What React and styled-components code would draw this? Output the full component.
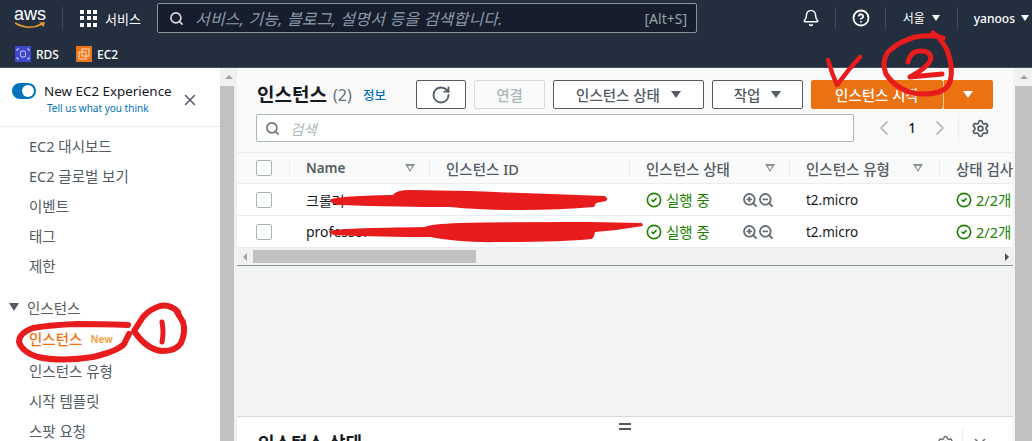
import React from "react";
import styled, { createGlobalStyle } from "styled-components";
import {
  Bell,
  ChevronLeft,
  ChevronRight,
  CircleCheck,
  CircleHelp,
  RotateCw,
  Search,
  Settings,
  X,
  ZoomIn,
  ZoomOut,
} from "lucide-react";

const GlobalStyle = createGlobalStyle`
  html, body {
    margin: 0;
    padding: 0;
    background: #fff;
  }
  body {
    font-family: "Noto Sans", "Noto Sans CJK KR", sans-serif;
  }
`;

const Page = styled.div`
  position: relative;
  width: 1032px;
  height: 441px;
  overflow: hidden;
  font-size: 13.5px;
  color: #16191f;
`;

/* ---- top nav ---- */

const TopBar = styled.header`
  height: 42px;
  box-sizing: border-box;
  padding-bottom: 6px;
  background: #232f3e;
  display: flex;
  align-items: center;
  color: #fff;
`;

const Logo = styled.div`
  width: 34px;
  margin-left: 13px;
  display: flex;
  flex-direction: column;
  align-items: center;
  font-family: "Liberation Sans", sans-serif;
  font-size: 18px;
  line-height: 17px;

  svg {
    display: block;
    margin-top: -2px;
  }
`;

const NavDivider = styled.span`
  width: 1px;
  height: 22px;
  background: #414d5c;
  margin: ${(p) => p.$margin || "0"};
`;

const Dots = styled.div`
  display: grid;
  grid-template-columns: repeat(3, 4px);
  grid-auto-rows: 4px;
  gap: 2.5px;
  margin-right: 8px;

  span {
    background: #fff;
  }
`;

const ServiceLabel = styled.span`
  font-size: 13px;
  width: 37px;
`;

const GlobalSearch = styled.div`
  width: 540px;
  height: 30px;
  box-sizing: border-box;
  margin-left: 15px;
  background: #161e2d;
  border: 1px solid #879596;
  border-radius: 2px;
  display: flex;
  align-items: center;
  padding: 0 9px 0 11px;
  color: #95a5a6;
`;

const GlobalPlaceholder = styled.span`
  flex: 1;
  margin-left: 11px;
  font-style: italic;
  font-size: 16px;
  letter-spacing: 0.2px;
  color: #8d99a8;
`;

const NavRight = styled.div`
  display: flex;
  align-items: center;
  margin-left: auto;
  height: 100%;
`;

const NavCaret = styled.span`
  width: 0;
  height: 0;
  border-left: 4.5px solid transparent;
  border-right: 4.5px solid transparent;
  border-top: 6px solid #fff;
  margin-left: ${(p) => p.$gap || 7}px;
  margin-right: ${(p) => p.$end || 0}px;
`;

const NavText = styled.span`
  font-size: ${(p) => p.$size || 12}px;
  font-weight: ${(p) => p.$weight || 400};
`;

const ShortcutBar = styled.div`
  height: 26px;
  background: #232f3e;
  display: flex;
  align-items: center;
  padding-left: 15px;
  padding-bottom: 1px;
  box-sizing: border-box;
  border-bottom: 1px solid #414d5c;
  color: #fff;
  font-size: 12px;
  font-weight: 500;
`;

const Shortcut = styled.div`
  display: flex;
  align-items: center;
  gap: 5px;
  margin-right: 17px;
`;

const ServiceIcon = styled.span`
  width: 16px;
  height: 16px;
  display: block;
  background: ${(p) => p.$bg};
`;

/* ---- body ---- */

const Body = styled.div`
  height: 373px;
  display: flex;
`;

const Sidebar = styled.aside`
  width: 220px;
  flex: none;
  background: #fff;
  overflow: hidden;
`;

const ToggleBlock = styled.div`
  height: 59px;
  box-sizing: border-box;
  border-bottom: 1px solid #eaeded;
  position: relative;
  padding: 14px 0 0 12px;
`;

const ToggleRow = styled.div`
  display: flex;
  align-items: center;
  gap: 8px;
  font-size: 13.4px;
  line-height: 18px;
  color: #16191f;
  white-space: nowrap;
`;

const Toggle = styled.span`
  width: 24px;
  height: 16px;
  border-radius: 8px;
  background: #0073bb;
  display: flex;
  justify-content: flex-end;
  align-items: center;
  flex: none;

  &::after {
    content: "";
    width: 12px;
    height: 12px;
    border-radius: 50%;
    background: #fff;
    margin-right: 2px;
  }
`;

const FeedbackLink = styled.div`
  margin: 1px 0 0 35px;
  font-size: 10px;
  line-height: 14px;
  color: #0073bb;
`;

const CloseButton = styled.span`
  position: absolute;
  left: 181px;
  top: 23px;
  color: #545b64;
  display: flex;
`;

const NavList = styled.nav`
  padding-top: 3px;
  display: flex;
  flex-direction: column;
`;

const NavItem = styled.div`
  height: ${(p) => p.$h || 30}px;
  margin-top: ${(p) => p.$mt || 0}px;
  display: flex;
  align-items: center;
  padding-left: 29px;
  font-size: 14.5px;
  color: ${(p) => (p.$active ? "#ec7211" : "#545b64")};
  font-weight: ${(p) => (p.$active ? 500 : 400)};
  flex: none;
`;

const SectionHead = styled(NavItem)`
  padding-left: 9px;
  color: #545b64;
  gap: 8px;
`;

const SectionCaret = styled.span`
  width: 0;
  height: 0;
  border-left: 5.5px solid transparent;
  border-right: 5.5px solid transparent;
  border-top: 8px solid #545b64;
`;

const NewTag = styled.span`
  font-size: 10px;
  font-weight: 700;
  margin-left: 8px;
  color: #f7a44c;
`;

const ScrollTrack = styled.div`
  width: 17px;
  flex: none;
  background: #f1f1f1;
  display: flex;
  flex-direction: column;
  align-items: center;
`;

const ScrollUp = styled.span`
  width: 0;
  height: 0;
  margin-top: 7px;
  border-left: 4px solid transparent;
  border-right: 4px solid transparent;
  border-bottom: 4px solid #a3a3a3;
`;

const ScrollThumb = styled.div`
  width: ${(p) => p.$w}px;
  align-self: flex-start;
  margin-top: 7px;
  flex: 1;
  background: #c1c1c1;
`;

const Main = styled.main`
  flex: 1;
  min-width: 0;
  background: #f2f3f3;
  display: flex;
  flex-direction: column;
`;

const Panel = styled.section`
  background: #fafafa;
  padding: 12px 20px 10px 19px;
  height: 85px;
  box-sizing: border-box;
  margin-right: 2px;
  border-bottom: 1px solid #eaeded;
`;

const TitleRow = styled.div`
  display: flex;
  align-items: center;
  height: 29px;
`;

const Title = styled.h1`
  margin: 0 0 0 1px;
  font-size: 19px;
  font-weight: 700;
  color: #16191f;
  line-height: 24px;
  width: 76px;
  white-space: nowrap;
`;

const Count = styled.span`
  font-size: 16px;
  color: #687078;
  width: 30px;
`;

const InfoLink = styled.span`
  font-size: 12.5px;
  font-weight: 500;
  color: #0073bb;
  width: 53px;
`;

const Button = styled.button`
  height: 29px;
  width: ${(p) => p.$w}px;
  margin-left: ${(p) => p.$ml || 0}px;
  box-sizing: border-box;
  border: 1px solid ${(p) => (p.$disabled ? "#d5dbdb" : "#545b64")};
  border-radius: 2px;
  background: ${(p) => (p.$disabled ? "#fafafa" : "#fff")};
  color: ${(p) => (p.$disabled ? "#aab7b8" : "#545b64")};
  font: inherit;
  font-size: 14.5px;
  font-weight: 500;
  padding: 0;
  display: flex;
  align-items: center;
  justify-content: center;
  gap: 11px;
  flex: none;
`;

const PrimaryButton = styled(Button)`
  background: #ec7211;
  border-color: #ec7211;
  border-left-color: ${(p) => (p.$split ? "#f6c7a0" : "#ec7211")};
  color: #fff;
`;

const Caret = styled.span`
  width: 0;
  height: 0;
  border-left: 5px solid transparent;
  border-right: 5px solid transparent;
  border-top: 7.5px solid ${(p) => p.$color || "#545b64"};
`;

const SearchRow = styled.div`
  margin-top: 5px;
  display: flex;
  align-items: center;
`;

const FilterInput = styled.div`
  width: 598px;
  height: 28px;
  box-sizing: border-box;
  background: #fff;
  border: 1px solid #aab7b8;
  border-radius: 2px;
  display: flex;
  align-items: center;
  padding-left: 8px;
  color: #687078;
  flex: none;
`;

const FilterPlaceholder = styled.span`
  margin-left: 10px;
  font-style: italic;
  font-size: 14.5px;
  color: #aab7b8;
`;

const Pager = styled.div`
  display: flex;
  align-items: center;
  margin-left: 18px;
  height: 28px;
  color: #aab7b8;
`;

const PageNumber = styled.span`
  width: 32px;
  text-align: center;
  font-size: 13.5px;
  font-weight: 500;
  color: #16191f;
`;

const PagerDivider = styled.span`
  width: 1px;
  height: 28px;
  background: #eaeded;
  margin: 0 12px 0 6px;
`;

const Table = styled.div`
  overflow: hidden;
  margin-right: 2px;
  display: flex;
  flex-direction: column;
`;

const Row = styled.div`
  height: ${(p) => (p.$head ? 31 : 32)}px;
  box-sizing: border-box;
  background: ${(p) => (p.$head ? "#fafafa" : "#fff")};
  border-bottom: 1px solid #eaeded;
  display: grid;
  grid-template-columns: 52px 140px 200px 160px 150px 1fr;
  align-items: center;
  white-space: nowrap;
`;

const Cell = styled.div`
  display: flex;
  align-items: center;
  height: 100%;
  padding-left: 17px;
  position: relative;
  overflow: hidden;
  box-sizing: border-box;
  font-size: ${(p) => p.$size || 14}px;
  color: ${(p) => (p.$head ? "#545b64" : "#16191f")};
  font-weight: ${(p) => p.$weight || (p.$head ? 500 : 400)};

  &::before {
    content: "";
    display: ${(p) => (p.$head ? "block" : "none")};
    position: absolute;
    left: 0;
    top: 8px;
    bottom: 8px;
    width: 1px;
    background: #eaeded;
  }
`;

const CheckCell = styled.div`
  display: flex;
  align-items: center;
  height: 100%;
  padding-left: 19px;
`;

const Checkbox = styled.span`
  width: 14px;
  height: 14px;
  border: 1px solid #aab7b8;
  border-radius: 2px;
  background: #fff;
`;

const SortIcon = styled.span`
  position: absolute;
  right: ${(p) => p.$right}px;
  top: 11px;
  width: 0;
  height: 0;
  border-left: 5px solid transparent;
  border-right: 5px solid transparent;
  border-top: 8px solid #879596;

  &::after {
    content: "";
    position: absolute;
    left: -2.5px;
    top: -6.5px;
    width: 0;
    height: 0;
    border-left: 2.5px solid transparent;
    border-right: 2.5px solid transparent;
    border-top: 4px solid #fafafa;
  }
`;

const Status = styled.span`
  display: flex;
  align-items: center;
  gap: 4px;
  font-size: 14.5px;
  color: #1d8102;
`;

const ZoomIcons = styled.span`
  position: absolute;
  left: 113px;
  top: 8px;
  display: flex;
  color: #687078;
`;

const HScroll = styled.div`
  height: 17px;
  background: #f1f1f1;
  border-bottom: 1px solid #879596;
  display: flex;
  align-items: center;
`;

const HArrow = styled.span`
  width: 0;
  height: 0;
  margin: ${(p) => p.$margin};
  border-top: 4px solid transparent;
  border-bottom: 4px solid transparent;
  ${(p) =>
    p.$left
      ? "border-right: 4px solid #a3a3a3;"
      : "border-left: 4px solid #505050;"}
`;

const HThumb = styled.span`
  width: 223px;
  height: 13px;
  background: #c1c1c1;
`;

const Spacer = styled.div`
  flex: 1;
`;

const BottomPanel = styled.section`
  height: 25px;
  background: #fff;
  border-top: 1px solid #d5dbdb;
  margin-right: 2px;
  position: relative;
  display: flex;
  align-items: flex-start;
  padding: 14px 0 0 21px;
  box-sizing: border-box;
`;

const BottomTitle = styled.h2`
  margin: 0;
  font-size: 18px;
  font-weight: 700;
  line-height: 24px;
  white-space: nowrap;
`;

const DragHandle = styled.span`
  position: absolute;
  left: 382px;
  top: 6px;
  width: 12px;
  height: 7px;
  box-sizing: border-box;
  border-top: 2px solid #545b64;
  border-bottom: 2px solid #545b64;
`;

const BottomTools = styled.div`
  margin-left: auto;
  margin-right: 24px;
  margin-top: 4px;
  display: flex;
  align-items: flex-start;
  color: #687078;
  gap: 8px;
`;

const ToolDivider = styled.span`
  width: 1px;
  height: 20px;
  background: #eaeded;
  margin-top: -8px;
`;

/* ---- red pen marks drawn over the page ---- */

const Overlay = styled.svg`
  position: absolute;
  left: 0;
  top: 0;
  pointer-events: none;
`;

const rows = [
  { name: "크롤러" },
  { name: "professor" },
];

const RedMarks = () => (
  <Overlay width="1032" height="441" viewBox="0 0 1032 441">
    <g fill="#e81c1c">
      <path d="M330 200 Q332 196 393 195 Q396 190 410 190 L470 191 Q540 194 605 196 Q609 199 606 201 L596 203 L594 207 Q560 210 520 210 Q480 210 450 207 Q400 207 340 205 Q330 204 330 200 Z" />
      <path d="M329 231 Q340 228 425 227 Q430 224 460 223 Q510 222 570 222 L590 222 L642 223 L643 226 Q620 230 595 232 L594 236 L592 239 Q560 242 500 242 Q460 243 430 237 Q380 237 335 235 Q329 234 329 231 Z" />
    </g>
    <g fill="none" stroke="#e81c1c" strokeLinecap="round" strokeLinejoin="round">
      <path
        strokeWidth="6"
        d="M128 325 Q100 324 77 324 Q50 325 33 328 Q19 333 19 342 Q22 352 38 357 Q60 362 93 357 Q118 351 124 344 L129 334"
      />
      <path
        strokeWidth="6"
        d="M178 312 Q170 304 160 306 Q150 309 143 317 L134 331 Q140 340 147 345 Q155 351 163 351 Q176 351 181 343 Q186 332 183 322 L177 312"
      />
      <path strokeWidth="5" d="M162 322 Q164 332 162 342" />
      <path
        strokeWidth="5"
        d="M943 38 Q933 34 915 37 Q898 42 888 52 Q881 62 886 74 Q898 92 920 94 Q945 95 950 82 Q954 68 947 50 Q941 38 933 33"
      />
      <path
        strokeWidth="5"
        d="M908 62 Q910 52 919 51 Q930 50 931 58 Q930 66 910 77 L942 74"
      />
      <path strokeWidth="4.5" d="M828 60 Q832 74 837 85 Q848 70 860 57" />
    </g>
  </Overlay>
);

const App = () => {
  return (
    <Page>
      <GlobalStyle />
      <TopBar>
        <Logo>
          aws
          <svg width="32" height="10" viewBox="0 0 32 10">
            <path d="M1 2 Q15 10 28 3" fill="none" stroke="#ec9a2c" strokeWidth="1.6" />
            <path d="M25 1.5 L31 1 L29.5 6 Z" fill="#ec9a2c" />
          </svg>
        </Logo>
        <NavDivider $margin="0 17px 0 15px" />
        <Dots>
          {Array.from({ length: 9 }).map((_, i) => (
            <span key={i} />
          ))}
        </Dots>
        <ServiceLabel>서비스</ServiceLabel>
        <GlobalSearch>
          <Search size={15} strokeWidth={2.6} color="#d5dbdb" />
          <GlobalPlaceholder>서비스, 기능, 블로그, 설명서 등을 검색합니다.</GlobalPlaceholder>
          <NavText $size={14}>[Alt+S]</NavText>
        </GlobalSearch>
        <NavRight>
          <Bell size={18} strokeWidth={2} />
          <NavDivider $margin="0 16px 0 15px" />
          <CircleHelp size={18} strokeWidth={2.4} />
          <NavDivider $margin="0 17px 0 15px" />
          <NavText>서울</NavText>
          <NavCaret />
          <NavDivider $margin="0 16px 0 17px" />
          <NavText $weight={500}>yanoos</NavText>
          <NavCaret $gap={6} $end={3} />
        </NavRight>
      </TopBar>
      <ShortcutBar>
        <Shortcut>
          <ServiceIcon $bg="#3f48cc">
            <svg width="16" height="16" viewBox="0 0 16 16" fill="none" stroke="#c9d2ff" strokeWidth="1">
              <rect x="5.5" y="5" width="5" height="6" rx="1.5" />
              <path d="M2 3h2M2 3v2M14 3h-2M14 3v2M2 13h2M2 13v-2M14 13h-2M14 13v-2" />
            </svg>
          </ServiceIcon>
          RDS
        </Shortcut>
        <Shortcut>
          <ServiceIcon $bg="#e8761b">
            <svg width="16" height="16" viewBox="0 0 16 16" fill="none" stroke="#ffd9b8" strokeWidth="1">
              <rect x="6" y="3" width="7" height="7" />
              <rect x="3" y="6" width="7" height="7" />
            </svg>
          </ServiceIcon>
          EC2
        </Shortcut>
      </ShortcutBar>
      <Body>
        <Sidebar>
          <ToggleBlock>
            <ToggleRow>
              <Toggle />
              New EC2 Experience
            </ToggleRow>
            <FeedbackLink>Tell us what you think</FeedbackLink>
            <CloseButton>
              <X size={18} strokeWidth={2} />
            </CloseButton>
          </ToggleBlock>
          <NavList>
            <NavItem>EC2 대시보드</NavItem>
            <NavItem>EC2 글로벌 보기</NavItem>
            <NavItem>이벤트</NavItem>
            <NavItem>태그</NavItem>
            <NavItem>제한</NavItem>
            <SectionHead $mt={12}>
              <SectionCaret />
              인스턴스
            </SectionHead>
            <NavItem $active $h={33}>
              인스턴스
              <NewTag>New</NewTag>
            </NavItem>
            <NavItem>인스턴스 유형</NavItem>
            <NavItem>시작 템플릿</NavItem>
            <NavItem>스팟 요청</NavItem>
          </NavList>
        </Sidebar>
        <ScrollTrack>
          <ScrollUp />
          <ScrollThumb $w={14} />
        </ScrollTrack>
        <Main>
          <Panel>
            <TitleRow>
              <Title>인스턴스</Title>
              <Count>(2)</Count>
              <InfoLink>정보</InfoLink>
              <Button $w={50}>
                <RotateCw size={20} strokeWidth={2.2} />
              </Button>
              <Button $w={71} $ml={8} $disabled>
                연결
              </Button>
              <Button $w={151} $ml={8}>
                인스턴스 상태
                <Caret />
              </Button>
              <Button $w={91} $ml={8}>
                작업
                <Caret />
              </Button>
              <PrimaryButton $w={132} $ml={8}>
                인스턴스 시작
              </PrimaryButton>
              <PrimaryButton $w={50} $split>
                <Caret $color="#fff" />
              </PrimaryButton>
            </TitleRow>
            <SearchRow>
              <FilterInput>
                <Search size={15} strokeWidth={2.5} />
                <FilterPlaceholder>검색</FilterPlaceholder>
              </FilterInput>
              <Pager>
                <ChevronLeft size={24} strokeWidth={1.7} />
                <PageNumber>1</PageNumber>
                <ChevronRight size={24} strokeWidth={1.7} />
                <PagerDivider />
                <Settings size={19} strokeWidth={2.2} color="#545b64" />
              </Pager>
            </SearchRow>
          </Panel>
          <Table>
            <Row $head>
              <CheckCell>
                <Checkbox />
              </CheckCell>
              <Cell $head $size={13.5} $weight={600}>
                Name
                <SortIcon $right={14} />
              </Cell>
              <Cell $head $size={14.5}>인스턴스 ID</Cell>
              <Cell $head $size={14.5}>
                인스턴스 상태
                <SortIcon $right={14} />
              </Cell>
              <Cell $head $size={14.5}>
                인스턴스 유형
                <SortIcon $right={16} />
              </Cell>
              <Cell $head $size={14.5}>상태 검사</Cell>
            </Row>
            {rows.map((row) => (
              <Row key={row.name}>
                <CheckCell>
                  <Checkbox />
                </CheckCell>
                <Cell>{row.name}</Cell>
                <Cell />
                <Cell>
                  <Status>
                    <CircleCheck size={16} strokeWidth={2.4} />
                    실행 중
                  </Status>
                  <ZoomIcons>
                    <ZoomIn size={16} strokeWidth={2.8} />
                    <ZoomOut size={16} strokeWidth={2.8} />
                  </ZoomIcons>
                </Cell>
                <Cell $size={13.5}>t2.micro</Cell>
                <Cell>
                  <Status>
                    <CircleCheck size={16} strokeWidth={2.4} />
                    2/2개 검사 통과
                  </Status>
                </Cell>
              </Row>
            ))}
            <HScroll>
              <HArrow $left $margin="0 6px 0 6px" />
              <HThumb />
              <HArrow $margin="0 4px 0 auto" />
            </HScroll>
          </Table>
          <Spacer />
          <BottomPanel>
            <DragHandle />
            <BottomTitle>인스턴스 상태</BottomTitle>
            <BottomTools>
              <Settings size={17} strokeWidth={2} />
              <ToolDivider />
              <X size={18} strokeWidth={2} />
            </BottomTools>
          </BottomPanel>
        </Main>
        <ScrollTrack>
          <ScrollUp />
          <ScrollThumb $w={17} />
        </ScrollTrack>
      </Body>
      <RedMarks />
    </Page>
  );
};

export default App;
